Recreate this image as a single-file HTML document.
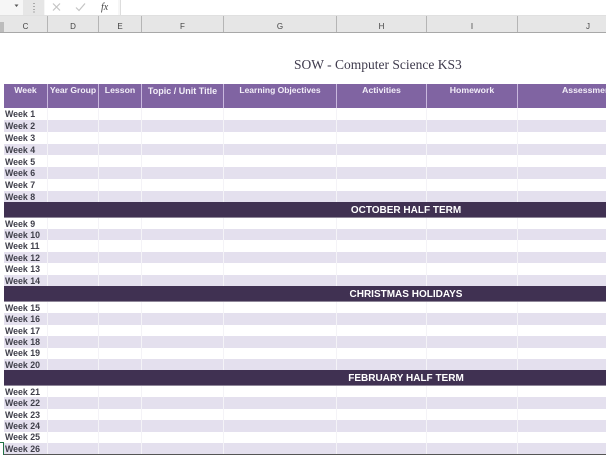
<!DOCTYPE html>
<html><head><meta charset="utf-8">
<style>
html,body{margin:0;padding:0;background:#fff;}
#p{position:relative;width:606px;height:455px;overflow:hidden;background:#fff;font-family:"Liberation Sans",sans-serif;filter:blur(0.35px);}
#p div{position:absolute;white-space:nowrap;}
.b{left:4px;width:602px;background:#e4e0ee;}
.v{top:108px;width:1px;height:347px;background:#f4f3f7;}
.w{left:5px;font-size:8.8px;font-weight:bold;color:#3f3f4a;line-height:12px;height:12px;}
.d{left:4px;width:602px;background:#403152;}
.t{left:4px;width:804px;text-align:center;color:#fff;font-weight:bold;font-size:10px;line-height:15px;}
.h{top:84px;height:24px;text-align:center;color:#f2eef8;font-weight:bold;font-size:8.7px;line-height:13px;}
.s{top:84px;width:1px;height:24px;background:#c9b8de;}
.c{top:22px;font-size:8px;line-height:10px;color:#444;text-align:center;}
.k{top:16px;width:1px;height:16px;background:#b5b5b5;}
</style></head>
<body><div id="p">
<div style="left:0;top:0;width:606px;height:15px;background:#f6f6f6;"></div>
<div style="left:0;top:15px;width:606px;height:1px;background:#e0e0e0;"></div>
<div style="left:23px;top:0;width:21px;height:15px;background:#e6e6e6;"></div>
<div style="left:45px;top:0;width:73px;height:15px;background:#fff;"></div>
<div style="left:120px;top:0;width:486px;height:15px;background:#fff;border-left:1px solid #ddd;"></div>
<svg style="position:absolute;left:0;top:0" width="120" height="15">
<path d="M14.5 4.5h4l-2 2.5z" fill="#555"/>
<path d="M33 3.5h2M33 6.5h2M33 9.5h2M33 12h2" stroke="#aaa" stroke-width="1"/>
<path d="M53 3.5l7 7M60 3.5l-7 7" stroke="#c4c4c4" stroke-width="1.2" fill="none"/>
<path d="M76 7.5l3 3 6-7" stroke="#c4c4c4" stroke-width="1.2" fill="none"/>
<text x="101" y="10" font-family="Liberation Serif" font-style="italic" font-size="10" fill="#444">fx</text>
</svg>

<div style="left:0;top:16px;width:606px;height:16px;background:#e6e6e6;"></div>
<div style="left:0;top:32px;width:606px;height:1px;background:#a8a8a8;"></div>
<div style="left:0;top:22px;width:4px;height:10px;background:#bcbcbc;"></div>
<div class="k" style="left:47px"></div><div class="k" style="left:98px"></div><div class="k" style="left:141px"></div><div class="k" style="left:223px"></div><div class="k" style="left:336px"></div><div class="k" style="left:426px"></div><div class="k" style="left:517px"></div>
<div class="c" style="left:4px;width:43px">C</div>
<div class="c" style="left:48px;width:50px">D</div>
<div class="c" style="left:99px;width:42px">E</div>
<div class="c" style="left:142px;width:81px">F</div>
<div class="c" style="left:224px;width:112px">G</div>
<div class="c" style="left:337px;width:89px">H</div>
<div class="c" style="left:427px;width:90px">I</div>
<div class="c" style="left:518px;width:140px">J</div>

<div style="left:294px;top:57px;font-family:'Liberation Serif',serif;font-size:13.5px;line-height:16px;color:#3e3a4c;">SOW - Computer Science KS3</div>

<div style="left:4px;top:84px;width:602px;height:24px;background:#8064a2;"></div>
<div class="s" style="left:47px"></div><div class="s" style="left:98px"></div><div class="s" style="left:141px"></div><div class="s" style="left:223px"></div><div class="s" style="left:336px"></div><div class="s" style="left:426px"></div><div class="s" style="left:517px"></div>
<div class="h" style="left:4px;width:43px">Week</div>
<div class="h" style="left:48px;width:50px;font-size:8.6px">Year Group</div>
<div class="h" style="left:99px;width:42px">Lesson</div>
<div class="h" style="left:142px;width:81px;font-size:9px;top:85px">Topic / Unit Title</div>
<div class="h" style="left:224px;width:112px;font-size:8.5px">Learning Objectives</div>
<div class="h" style="left:337px;width:89px">Activities</div>
<div class="h" style="left:427px;width:90px">Homework</div>
<div class="h" style="left:562px;width:60px;text-align:left">Assessment</div>

<div class="b" style="top:120px;height:12px"></div>
<div class="b" style="top:144px;height:11px"></div>
<div class="b" style="top:167px;height:12px"></div>
<div class="b" style="top:191px;height:11px"></div>
<div class="b" style="top:229px;height:11px"></div>
<div class="b" style="top:252px;height:11px"></div>
<div class="b" style="top:275px;height:11px"></div>
<div class="b" style="top:313px;height:12px"></div>
<div class="b" style="top:336px;height:12px"></div>
<div class="b" style="top:359px;height:11px"></div>
<div class="b" style="top:397px;height:12px"></div>
<div class="b" style="top:420px;height:12px"></div>
<div class="b" style="top:443px;height:11px"></div>

<div class="v" style="left:47px"></div><div class="v" style="left:98px"></div><div class="v" style="left:141px"></div><div class="v" style="left:223px"></div><div class="v" style="left:336px"></div><div class="v" style="left:426px"></div><div class="v" style="left:517px"></div>

<div class="d" style="top:202px;height:15px"></div>
<div style="left:4px;top:217px;width:602px;height:1px;background:#8f8799;"></div>
<div class="d" style="top:286px;height:15px"></div>
<div style="left:4px;top:301px;width:602px;height:1px;background:#8f8799;"></div>
<div class="d" style="top:370px;height:15px"></div>
<div style="left:4px;top:385px;width:602px;height:1px;background:#8f8799;"></div>
<div class="t" style="top:203px">OCTOBER HALF TERM</div>
<div class="t" style="top:287px">CHRISTMAS HOLIDAYS</div>
<div class="t" style="top:371px">FEBRUARY HALF TERM</div>

<div class="w" style="top:108px">Week 1</div>
<div class="w" style="top:120px">Week 2</div>
<div class="w" style="top:132px">Week 3</div>
<div class="w" style="top:144px">Week 4</div>
<div class="w" style="top:156px">Week 5</div>
<div class="w" style="top:167px">Week 6</div>
<div class="w" style="top:179px">Week 7</div>
<div class="w" style="top:191px">Week 8</div>
<div class="w" style="top:218px">Week 9</div>
<div class="w" style="top:229px">Week 10</div>
<div class="w" style="top:240px">Week 11</div>
<div class="w" style="top:252px">Week 12</div>
<div class="w" style="top:263px">Week 13</div>
<div class="w" style="top:275px">Week 14</div>
<div class="w" style="top:302px">Week 15</div>
<div class="w" style="top:313px">Week 16</div>
<div class="w" style="top:325px">Week 17</div>
<div class="w" style="top:336px">Week 18</div>
<div class="w" style="top:347px">Week 19</div>
<div class="w" style="top:359px">Week 20</div>
<div class="w" style="top:386px">Week 21</div>
<div class="w" style="top:397px">Week 22</div>
<div class="w" style="top:409px">Week 23</div>
<div class="w" style="top:420px">Week 24</div>
<div class="w" style="top:431px">Week 25</div>
<div class="w" style="top:443px">Week 26</div>

<div style="left:4px;top:454px;width:602px;height:1px;background:#555;"></div>
<div style="left:0;top:442px;width:3px;height:13px;border-right:1px solid #217346;border-top:1px solid #217346;"></div>
</div></body></html>
